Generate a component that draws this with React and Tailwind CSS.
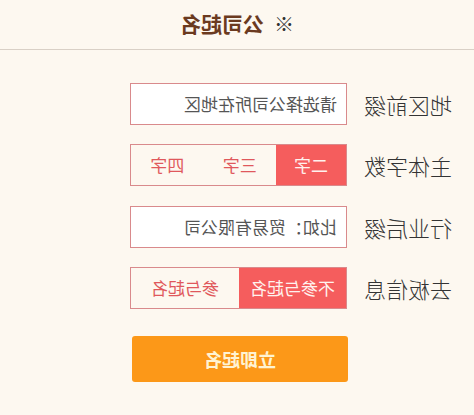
export default function App() {
  const font = { fontFamily: '"Noto Sans CJK SC", "Noto Sans", sans-serif' };
  return (
    <div className="w-[474px] h-[415px] overflow-hidden bg-[#fdf8f0]">
      <div className="-scale-x-100 w-full h-full" style={font}>
        <div className="h-[50px] border-b border-[#d9d0c6] flex items-center justify-center gap-[10px] pb-[2px]">
          <span className="text-[20px] text-[#333] leading-none">※</span>
          <span className="text-[21px] font-bold text-[#6b3a1f] leading-none">公司起名</span>
        </div>

        <div className="pt-[33px] pl-[22px] flex flex-col gap-[19px]">
          <div className="flex items-center">
            <div className="w-[105px] text-[22px] font-light text-[#333]">地区前缀</div>
            <div className="w-[217px] h-[42px] bg-white border border-[#d98a8c] flex items-center pl-[9px] text-[17px] text-[#555]">
              请选择公司所在地区
            </div>
          </div>

          <div className="flex items-center">
            <div className="w-[105px] text-[22px] font-light text-[#333]">主体字数</div>
            <div className="w-[217px] h-[42px] border border-[#d98a8c] flex text-[17px]">
              <div className="w-[70px] bg-[#f55d5d] text-[#fff2ee] flex items-center justify-center">二字</div>
              <div className="flex-1 text-[#e0585c] flex items-center justify-center">三字</div>
              <div className="flex-1 text-[#e0585c] flex items-center justify-center">四字</div>
            </div>
          </div>

          <div className="flex items-center mt-[1px]">
            <div className="w-[105px] text-[22px] font-light text-[#333]">行业后缀</div>
            <div className="w-[217px] h-[42px] bg-white border border-[#d98a8c] flex items-center pl-[9px] text-[17px] text-[#555]">
              比如：贸易有限公司
            </div>
          </div>

          <div className="flex items-center">
            <div className="w-[105px] text-[22px] font-light text-[#333]">去板信息</div>
            <div className="w-[217px] h-[42px] border border-[#d98a8c] flex text-[17px]">
              <div className="w-[107px] bg-[#f55d5d] text-[#fff2ee] flex items-center justify-center">不参与起名</div>
              <div className="flex-1 text-[#e0585c] flex items-center justify-center">参与起名</div>
            </div>
          </div>

          <div className="flex mt-[8px]">
            <div className="w-[104px]" />
            <button className="w-[216px] h-[46px] rounded-[3px] bg-[#fc9818] text-[#fff3d2] text-[18px] font-bold flex items-center justify-center">
              立即起名
            </button>
          </div>
        </div>
      </div>
    </div>
  );
}
